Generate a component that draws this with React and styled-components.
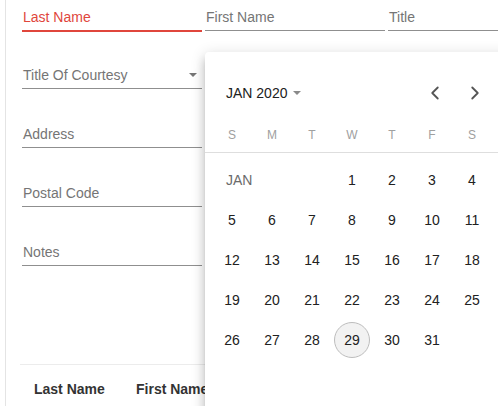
import React from 'react';
import styled, { createGlobalStyle } from 'styled-components';
import { ChevronLeft, ChevronRight } from 'lucide-react';

const GlobalStyle = createGlobalStyle`
  html, body {
    margin: 0;
    padding: 0;
    background: #fff;
    overflow: hidden;
  }
  body {
    font-family: "Liberation Sans", Arial, sans-serif;
  }
`;

const Page = styled.div`
  position: relative;
  width: 498px;
  height: 406px;
  overflow: hidden;
`;

const Card = styled.div`
  margin-left: 5px;
  height: 406px;
  border-left: 1px solid #e4e4e4;
  padding: 7px 0 0 16px;
  box-sizing: border-box;
`;

const TopRow = styled.div`
  display: grid;
  grid-template-columns: 180px 180px 180px;
  column-gap: 3px;
`;

const Column = styled.div`
  display: flex;
  flex-direction: column;
  gap: 35px;
  width: 180px;
  margin-top: 34px;
`;

const Field = styled.div`
  display: flex;
  align-items: center;
  justify-content: space-between;
  height: 20px;
  padding: 0 1px 3px;
  font-size: 14px;
  line-height: 20px;
  color: ${p => (p.$error ? '#e0463c' : '#757575')};
  border-bottom: ${p => (p.$error ? '2px solid #e0463c' : '1px solid #8f8f8f')};
  margin-bottom: ${p => (p.$error ? '-1px' : '0')};
`;

const Caret = styled.span`
  width: 0;
  height: 0;
  border-left: 4px solid transparent;
  border-right: 4px solid transparent;
  border-top: 4px solid ${p => p.$color || '#757575'};
  margin-right: ${p => p.$mr || 4}px;
  margin-left: ${p => p.$ml || 0}px;
`;

const TableHead = styled.div`
  display: grid;
  grid-template-columns: 102px 102px;
  margin: 98px 0 0 -2px;
  padding: 14px 0 0 14px;
  border-top: 1px solid #ececec;
  font-size: 14px;
  font-weight: bold;
  color: #333;
  line-height: 20px;
`;

const Popup = styled.div`
  position: absolute;
  left: 205px;
  top: 52px;
  width: 330px;
  height: 400px;
  background: #fff;
  border-radius: 4px;
  box-shadow: 0 5px 5px -3px rgba(0, 0, 0, 0.2), 0 8px 10px 1px rgba(0, 0, 0, 0.14),
    0 3px 14px 2px rgba(0, 0, 0, 0.12);
`;

const Header = styled.div`
  display: flex;
  align-items: center;
  height: 22px;
  padding: 30px 0 13px 21px;
`;

const MonthTitle = styled.div`
  display: flex;
  align-items: center;
  font-size: 14px;
  color: #212121;
  flex: 1;
`;

const NavButton = styled.span`
  display: flex;
  align-items: center;
  justify-content: center;
  width: 40px;
  height: 30px;
  color: #555;
`;

const Nav = styled.div`
  display: flex;
  margin-right: 40px;
`;

const Weekdays = styled.div`
  display: grid;
  grid-template-columns: repeat(7, 40px);
  padding-left: 7px;
  height: 35px;
  align-items: center;
  border-bottom: 1px solid #dedede;
  font-size: 12px;
  color: #a0a0a0;
  text-align: center;
`;

const Dates = styled.div`
  display: grid;
  grid-template-columns: repeat(7, 40px);
  grid-auto-rows: 40px;
  padding: 7px 0 0 7px;
`;

const Cell = styled.div`
  display: flex;
  align-items: center;
  justify-content: center;
  font-size: 14px;
  color: #212121;
`;

const MonthLabel = styled(Cell)`
  grid-column: span 3;
  justify-content: flex-start;
  padding-left: 14px;
  color: #6b6b6b;
`;

const Day = styled.span`
  display: flex;
  align-items: center;
  justify-content: center;
  width: 36px;
  height: 36px;
  border-radius: 50%;
  box-sizing: border-box;
  border: 1px solid ${p => (p.$selected ? '#bdbdbd' : 'transparent')};
  background: ${p => (p.$selected ? '#f2f2f2' : 'transparent')};
`;

const days = Array.from({ length: 31 }, (_, i) => i + 1);

export default function App() {
  return (
    <Page>
      <GlobalStyle />
      <Card>
        <TopRow>
          <Field $error>Last Name</Field>
          <Field>First Name</Field>
          <Field>Title</Field>
        </TopRow>
        <Column>
          <Field>
            Title Of Courtesy
            <Caret />
          </Field>
          <Field>Address</Field>
          <Field>Postal Code</Field>
          <Field>Notes</Field>
        </Column>
        <TableHead>
          <span>Last Name</span>
          <span>First Name</span>
        </TableHead>
      </Card>

      <Popup>
        <Header>
          <MonthTitle>
            JAN 2020
            <Caret $ml={6} $color="#8a8a8a" />
          </MonthTitle>
          <Nav>
            <NavButton><ChevronLeft size={22} strokeWidth={2} /></NavButton>
            <NavButton><ChevronRight size={22} strokeWidth={2} /></NavButton>
          </Nav>
        </Header>
        <Weekdays>
          {['S', 'M', 'T', 'W', 'T', 'F', 'S'].map((d, i) => (
            <span key={`wd-${i}`}>{d}</span>
          ))}
        </Weekdays>
        <Dates>
          <MonthLabel>JAN</MonthLabel>
          {days.map(d => (
            <Cell key={`day-${d}`}>
              <Day $selected={d === 29}>{d}</Day>
            </Cell>
          ))}
        </Dates>
      </Popup>
    </Page>
  );
}
